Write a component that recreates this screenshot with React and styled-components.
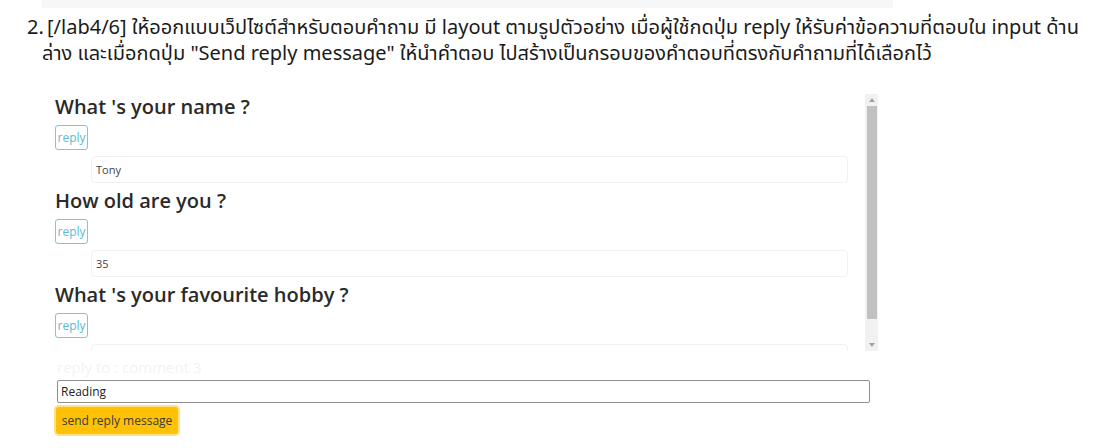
import React, { useState } from 'react';
import styled, { createGlobalStyle } from 'styled-components';

const GlobalStyle = createGlobalStyle`
  html, body {
    margin: 0;
    background: #fff;
  }
  body {
    font-family: "Noto Sans", "Noto Sans Thai", sans-serif;
  }
`;

const Page = styled.div`
  width: 1103px;
  height: 448px;
  overflow: hidden;
`;

const CodeStrip = styled.div`
  margin-left: 42px;
  width: 851px;
  height: 8px;
  background: #f6f7f8;
`;

const Instruction = styled.div`
  display: flex;
  margin-top: 6px;
  padding-left: 27px;
  font-size: 20px;
  line-height: 26px;
  color: #1b1b1b;
`;

const ItemNumber = styled.span`
  width: 15px;
  flex-shrink: 0;
`;

const InstructionLine = styled.div`
  white-space: nowrap;
  padding-left: ${({ $indent }) => ($indent ? '5px' : '0')};
`;

const Demo = styled.div`
  margin: 28px 0 0 44px;
  width: 834px;
  font-family: "Open Sans", "Noto Sans", sans-serif;
`;

const ScrollFrame = styled.div`
  display: flex;
  height: 257px;
`;

const Viewport = styled.div`
  flex: 1;
  overflow: hidden;
  padding-left: 11px;
`;

const Scrollbar = styled.div`
  width: 13px;
  display: flex;
  flex-direction: column;
  background: #f1f1f1;
`;

const ArrowButton = styled.div`
  height: 12px;
  display: flex;
  align-items: center;
  justify-content: center;

  &::before {
    content: '';
    width: 0;
    height: 0;
    border-left: 3px solid transparent;
    border-right: 3px solid transparent;
    ${({ $down }) =>
      $down ? 'border-top: 4px solid #a3a3a3;' : 'border-bottom: 4px solid #a3a3a3;'}
  }
`;

const Track = styled.div`
  flex: 1;
  padding: 0 1.5px;
`;

const Thumb = styled.div`
  background: #c1c1c1;
`;

const Question = styled.div`
  display: flex;
  flex-direction: column;
  align-items: flex-start;
  padding-bottom: 5px;
`;

const Heading = styled.h3`
  margin: 0;
  font-size: 20px;
  font-weight: 600;
  line-height: 25px;
  color: #2a2a2a;
`;

const ReplyButton = styled.button`
  margin-top: 6px;
  height: 25px;
  width: 33px;
  padding: 0;
  border: 1px solid #6fcbe0;
  border-radius: 3px;
  background: #fff;
  color: #5bbad2;
  font-family: inherit;
  font-size: 12px;
  cursor: pointer;
`;

const Answer = styled.div`
  box-sizing: border-box;
  margin: 6px 0 0 36px;
  width: 757px;
  height: 27px;
  display: flex;
  align-items: center;
  padding-left: 4px;
  border: 1px solid #f1f1f1;
  border-radius: 4px;
  font-size: 11px;
  color: #444;
`;

const Hint = styled.div`
  margin: 6px 0 0 13px;
  height: 20px;
  line-height: 20px;
  font-size: 15px;
  color: #f3f3f3;
`;

const AnswerInput = styled.input`
  display: block;
  box-sizing: border-box;
  margin: 3px 0 0 13px;
  width: 813px;
  height: 23px;
  padding: 0 3px;
  border: 1px solid #8f8f8f;
  border-radius: 2px;
  font-family: inherit;
  font-size: 12px;
  color: #222;
  outline: none;
`;

const SendButton = styled.button`
  margin: 4px 0 0 12px;
  height: 27px;
  width: 122px;
  padding: 0;
  border: none;
  border-radius: 3px;
  background: #ffc107;
  box-shadow: 0 0 0 2px rgba(255, 193, 7, 0.5);
  color: #3a3a3a;
  font-family: inherit;
  font-size: 12px;
  cursor: pointer;
`;

const questions = [
  { id: 1, text: "What 's your name ?", answer: 'Tony' },
  { id: 2, text: 'How old are you ?', answer: '35' },
  { id: 3, text: "What 's your favourite hobby ?", answer: '' },
];

export default function App() {
  const [items, setItems] = useState(questions);
  const [selected, setSelected] = useState(3);
  const [reply, setReply] = useState('Reading');

  const sendReply = () => {
    setItems(items.map(q => (q.id === selected ? { ...q, answer: reply } : q)));
  };

  const thumbHeight = Math.round((257 / 281) * 233);

  return (
    <Page>
      <GlobalStyle />
      <CodeStrip />
      <Instruction>
        <ItemNumber>2.</ItemNumber>
        <div>
          <InstructionLine $indent>
            [/lab4/6] ให้ออกแบบเว็ปไซต์สำหรับตอบคำถาม มี layout ตามรูปตัวอย่าง เมื่อผู้ใช้กดปุ่ม reply ให้รับค่าข้อความที่ตอบใน input ด้าน
          </InstructionLine>
          <InstructionLine>
            ล่าง และเมื่อกดปุ่ม "Send reply message" ให้นำคำตอบ ไปสร้างเป็นกรอบของคำตอบที่ตรงกับคำถามที่ได้เลือกไว้
          </InstructionLine>
        </div>
      </Instruction>
      <Demo>
        <ScrollFrame>
          <Viewport>
            {items.map(q => (
              <Question key={q.id}>
                <Heading>{q.text}</Heading>
                <ReplyButton onClick={() => setSelected(q.id)}>reply</ReplyButton>
                <Answer>{q.answer}</Answer>
              </Question>
            ))}
          </Viewport>
          <Scrollbar>
            <ArrowButton />
            <Track>
              <Thumb style={{ height: thumbHeight }} />
            </Track>
            <ArrowButton $down />
          </Scrollbar>
        </ScrollFrame>
        <Hint>reply to : comment {selected}</Hint>
        <AnswerInput value={reply} onChange={e => setReply(e.target.value)} />
        <SendButton onClick={sendReply}>send reply message</SendButton>
      </Demo>
    </Page>
  );
}
